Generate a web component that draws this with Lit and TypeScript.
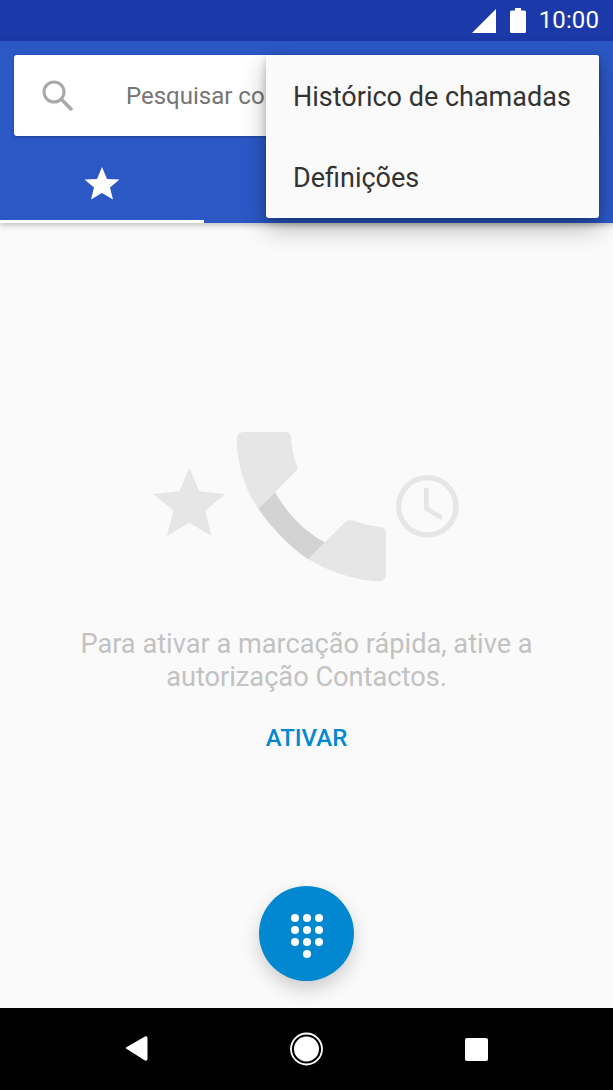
import { LitElement, html, css } from "lit";
import { customElement } from "lit/decorators.js";

@customElement("app-root")
export class AppRoot extends LitElement {
  static styles = css`
    :host { display: block; width: 613px; height: 1090px; font-family: Roboto, "Liberation Sans", sans-serif; position: relative; overflow: hidden; background: #fafafa; }
    .page { display: flex; flex-direction: column; height: 1090px; }
    .status { height: 41px; flex: none; background: #1c39aa; display: flex; align-items: center; justify-content: flex-end; padding-right: 14px; box-sizing: border-box; color: #fff; }
    .status .sig { margin-right: 14px; }
    .status .bat { margin-right: 13px; }
    .time { font-size: 24px; line-height: 41px; letter-spacing: 0.1px; }
    .header { height: 182px; flex: none; background: #2b58c5; box-sizing: border-box; padding: 14px 14px 0; display: flex; flex-direction: column; box-shadow: 0 2px 6px rgba(0,0,0,.25); position: relative; z-index: 1; }
    .search { height: 81px; flex: none; background: #fff; border-radius: 3px; display: flex; align-items: center; padding-left: 26px; box-shadow: 0 1px 3px rgba(0,0,0,.25); }
    .ph { font-size: 24px; color: #757575; margin-left: 50px; white-space: nowrap; }
    .tabs { flex: 1; margin: 0 -14px; display: flex; }
    .tab { width: 204px; box-sizing: border-box; border-bottom: 3px solid #fff; display: flex; align-items: center; justify-content: center; padding-top: 9px; }
    .menu { position: absolute; left: 266px; top: 55px; width: 333px; height: 163px; background: #fafafa; border-radius: 3px; z-index: 2; box-shadow: 0 10px 24px rgba(0,0,0,.28), 0 3px 8px rgba(0,0,0,.2); display: flex; flex-direction: column; padding-top: 2px; box-sizing: border-box; }
    .mi { height: 81.5px; display: flex; align-items: center; padding-left: 27px; font-size: 27px; color: #333; white-space: nowrap; }
    .main { flex: 1; display: flex; flex-direction: column; align-items: center; padding-top: 197px; box-sizing: border-box; }
    .art { display: block; margin-right: 3px; }
    .msg { margin-top: 38px; font-size: 27.2px; line-height: 33px; color: #c2c2c2; text-align: center; width: 500px; }
    .act { margin-top: 29px; font-size: 24px; font-weight: 500; color: #0288d1; line-height: 30px; }
    .fab { position: absolute; left: 259px; top: 886px; width: 95px; height: 95px; border-radius: 50%; background: #0288d1; box-shadow: 0 8px 18px rgba(0,0,0,.18); display: flex; align-items: center; justify-content: center; }
    .fab svg { margin-top: 2px; }
    .nav { height: 82px; flex: none; background: #000; position: relative; }
    .nav svg { display: block; }
  `;

  render() {
    return html`
      <div class="page">
        <div class="status">
          <svg class="sig" width="24" height="24" viewBox="0 0 24 24"><path d="M0 24 L24 0 V24 Z" fill="#fff"/></svg>
          <svg class="bat" width="16" height="25" viewBox="0 0 16 25"><path d="M1.5 2.5 H5 V0 H11 V2.5 H14.5 Q16 2.5 16 4 V23.5 Q16 25 14.5 25 H1.5 Q0 25 0 23.5 V4 Q0 2.5 1.5 2.5 Z" fill="#fff"/></svg>
          <span class="time">10:00</span>
        </div>
        <div class="header">
          <div class="search">
            <svg width="36" height="36" viewBox="0 0 36 36"><circle cx="14" cy="14" r="10" fill="none" stroke="#a8a8a8" stroke-width="3"/><path d="M21.5 21.5 L32 32" stroke="#a8a8a8" stroke-width="3.6"/></svg>
            <span class="ph">Pesquisar co</span>
          </div>
          <div class="tabs">
            <div class="tab">
              <svg width="36" height="34" viewBox="0 0 36 34"><path d="M18 1 L23 13 L35.500 13.500 L26 21.500 L29 33.500 L18 27 L7 33.500 L10 21.500 L0.500 13.500 L13 13 Z" fill="#fff"/></svg>
            </div>
          </div>
        </div>
        <div class="main">
          <svg class="art" width="330" height="170" viewBox="0 0 990 510">
            <path d="M40 222 L118 214 L148 143 L178 214 L255 222 L196 272 L214 348 L148 308 L81 348 L100 272 Z" fill="#e6e6e6"/>
            <path d="M290 60 Q290 36 312 36 H434 Q452 36 453 52 Q456 100 472 140 Q474 148 468 153 L405 217 L355 266 C318 215 292 140 290 60 Z" fill="#e6e6e6"/>
            <path d="M405 217 C445 285 495 335 555 367 L505 418 C450 380 395 325 355 266 Z" fill="#d3d3d3"/>
            <path d="M555 367 L615 307 Q625 298 640 302 Q680 316 722 321 Q738 323 738 338 V462 Q738 484 716 484 C640 482 570 455 505 418 Z" fill="#e6e6e6"/>
            <circle cx="862" cy="259" r="86" fill="none" stroke="#e6e6e6" stroke-width="16"/>
            <path d="M859 204 V265 L906 294" fill="none" stroke="#e6e6e6" stroke-width="14"/>
          </svg>
          <div class="msg">Para ativar a marcação rápida, ative a autorização Contactos.</div>
          <div class="act">ATIVAR</div>
        </div>
        <div class="nav">
          <svg width="613" height="82" viewBox="0 0 613 82">
            <path d="M126 40 L145 29 Q147 28 147 30 V51 Q147 53 145 52 Z" fill="#fff" stroke="#fff" stroke-width="1"/>
            <circle cx="306.500" cy="41" r="15.500" fill="none" stroke="#fff" stroke-width="1.800"/>
            <circle cx="306.500" cy="41" r="12.500" fill="#fff"/>
            <rect x="465" y="30" width="23" height="23" rx="2" fill="#fff"/>
          </svg>
        </div>
      </div>
      <div class="menu">
        <div class="mi">Histórico de chamadas</div>
        <div class="mi">Definições</div>
      </div>
      <div class="fab">
        <svg width="36" height="46" viewBox="0 0 36 46" fill="#fff">
          <circle cx="6" cy="6" r="4"/><circle cx="18" cy="6" r="4"/><circle cx="30" cy="6" r="4"/>
          <circle cx="6" cy="18" r="4"/><circle cx="18" cy="18" r="4"/><circle cx="30" cy="18" r="4"/>
          <circle cx="6" cy="30" r="4"/><circle cx="18" cy="30" r="4"/><circle cx="30" cy="30" r="4"/>
          <circle cx="18" cy="42" r="4"/>
        </svg>
      </div>
    `;
  }
}
